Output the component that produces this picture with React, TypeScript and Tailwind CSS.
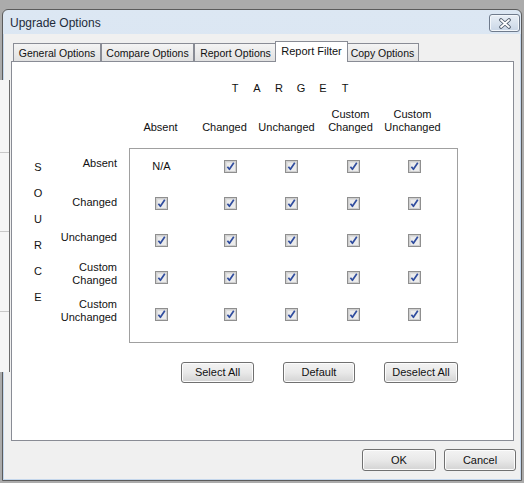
import React from "react";

const CheckBox = () => (
  <svg width="13" height="13" viewBox="0 0 13 13" className="block">
    <rect x="0.5" y="0.5" width="12" height="12" fill="#f4f4f4" stroke="#8f8f8f" />
    <rect x="1.5" y="1.5" width="10" height="10" fill="#dedede" stroke="#cfcfcf" />
    <rect x="3" y="3" width="8" height="8" fill="#ececec" />
    <path d="M3.4 6.8 L5.4 9.3 L9.8 2.8" stroke="#2f4c9e" strokeWidth="1.7" fill="none" strokeLinejoin="round" />
  </svg>
);

const Btn = ({ label, w }: { label: string; w: string }) => (
  <div
    className={`${w} h-[21px] border border-[#707070] rounded-[3px] bg-gradient-to-b from-[#f3f3f3] via-[#e9e9e9] to-[#d3d3d3] flex items-center justify-center leading-none shadow-[inset_0_0_0_1px_#fcfcfc]`}
  >
    {label}
  </div>
);

const Tab = ({ label, w }: { label: string; w: string }) => (
  <div
    className={`${w} h-[18px] border-t border-x border-[#898c95] bg-gradient-to-b from-[#f4f4f4] to-[#e1e1e1] flex items-center justify-center whitespace-nowrap text-[10.5px] leading-none pt-[1px]`}
  >
    {label}
  </div>
);

const cols = ["Absent", "Changed", "Unchanged", "Custom\nChanged", "Custom\nUnchanged"];
const rowLabels: { lines: string[]; mt: string }[] = [
  { lines: ["Absent"], mt: "mt-[9px]" },
  { lines: ["Changed"], mt: "mt-[26px]" },
  { lines: ["Unchanged"], mt: "mt-[22px]" },
  { lines: ["Custom", "Changed"], mt: "mt-[17px]" },
  { lines: ["Custom", "Unchanged"], mt: "mt-[11px]" },
];

export default function App() {
  return (
    <div className="w-[524px] h-[483px] bg-[#ababab] relative overflow-hidden font-['Liberation_Sans',Arial,sans-serif] text-[11px] text-[#111] pt-[9px] pl-[2px]">
      {/* window */}
      <div className="w-[520px] h-[472px] border border-[#5b5b5b] rounded-t-[6px] bg-gradient-to-b from-[#dce7f3] to-[#d2e0f0] flex flex-col overflow-hidden">
        {/* title bar */}
        <div className="h-[24px] flex items-start justify-between pl-[7px] pr-[1px]">
          <div className="text-[12px] leading-none text-[#1f2b3b] mt-[7px]">Upgrade Options</div>
          <div className="mt-[4px] w-[31px] h-[18px] border border-[#6f7b8c] rounded-[3px] bg-gradient-to-b from-[#e9eff6] to-[#c9d6e6] flex items-center justify-center shadow-[inset_0_0_0_1px_#f3f7fb]">
            <svg width="14" height="11" viewBox="0 0 14 11">
              <path d="M3 2 L11 9 M11 2 L3 9" stroke="#4c5868" strokeWidth="3.6" strokeLinecap="round" />
              <path d="M3 2 L11 9 M11 2 L3 9" stroke="#ffffff" strokeWidth="1.8" strokeLinecap="round" />
            </svg>
          </div>
        </div>
        {/* client */}
        <div className="flex-1 border-x border-b border-[#c5d7ec] bg-[#f0f0f0] pt-[7px] pl-[7px] flex flex-col">
          {/* tabs */}
          <div className="h-[20px] flex items-end pl-[2px]">
            <Tab label="General Options" w="w-[88px]" />
            <Tab label="Compare Options" w="w-[93px]" />
            <Tab label="Report Options" w="w-[83px]" />
            <div className="w-[73px] h-[21px] -mx-[2px] -mb-[1px] relative z-10 bg-white border-t border-x border-[#898c95] flex items-start justify-center pt-[4px] whitespace-nowrap leading-none">
              Report Filter
            </div>
            <Tab label="Copy Options" w="w-[73px]" />
          </div>
          {/* panel */}
          <div className="w-[503px] h-[380px] border border-[#898c95] bg-white flex flex-col">
            {/* TARGET */}
            <div className="mt-[20px] ml-[212px] flex leading-[13px]">
              {"TARGET".split("").map((c, i) => (
                <div key={i} className="w-[22px] text-center">
                  {c}
                </div>
              ))}
            </div>
            {/* column headers */}
            <div className="mt-[13px] h-[26px] ml-[142px] grid grid-cols-[64px_62px_64px_62px_13px] items-end leading-[13px]">
              {cols.map((c, i) => (
                <div key={i} className="w-[13px] flex justify-center whitespace-nowrap">
                  <div className="flex flex-col items-center">
                    {c.split("\n").map((l, j) => (
                      <div key={j}>{l}</div>
                    ))}
                  </div>
                </div>
              ))}
            </div>
            {/* main */}
            <div className="mt-[14px] flex">
              <div className="ml-[13px] w-[26px] pt-[6px] flex flex-col items-center leading-[26px]">
                {"SOURCE".split("").map((c, i) => (
                  <div key={i}>{c}</div>
                ))}
              </div>
              <div className="w-[66px] flex flex-col items-end leading-[13px] text-right whitespace-nowrap">
                {rowLabels.map((r, i) => (
                  <div key={i} className={r.mt}>
                    {r.lines.map((l, j) => (
                      <div key={j}>{l}</div>
                    ))}
                  </div>
                ))}
              </div>
              <div className="ml-[12px] w-[329px] h-[195px] border border-[#a0a0a0] pt-[11px] flex flex-col gap-[24px]">
                {[0, 1, 2, 3, 4].map((r) => (
                  <div key={r} className="pl-[25px] grid grid-cols-[69px_61px_62px_61px_13px] h-[13px]">
                    {[0, 1, 2, 3, 4].map((c) =>
                      r === 0 && c === 0 ? (
                        <div key={c} className="w-[13px] h-[13px] flex items-center justify-center whitespace-nowrap leading-none">
                          N/A
                        </div>
                      ) : (
                        <CheckBox key={c} />
                      )
                    )}
                  </div>
                ))}
              </div>
            </div>
            {/* buttons */}
            <div className="mt-[19px] ml-[169px] flex gap-[29px]">
              <Btn label="Select All" w="w-[73px]" />
              <Btn label="Default" w="w-[72px]" />
              <Btn label="Deselect All" w="w-[74px]" />
            </div>
          </div>
          {/* dialog buttons */}
          <div className="mt-[8px] flex justify-end gap-[8px] pr-[4px]">
            <Btn label="OK" w="w-[74px] h-[22px]" />
            <Btn label="Cancel" w="w-[72px] h-[22px]" />
          </div>
        </div>
      </div>
      {/* background window fragment visible at left edge */}
      <div className="absolute left-0 top-[80px] w-[10px] h-[292px] bg-[#f6f6f6] border-r border-[#6d6d6d] flex flex-col">
        <div className="h-[73px] border-b border-[#c8c8c8]" />
        <div className="h-[79px] border-b border-[#c8c8c8]" />
        <div className="h-[80px] border-b border-[#c8c8c8]" />
      </div>
    </div>
  );
}
